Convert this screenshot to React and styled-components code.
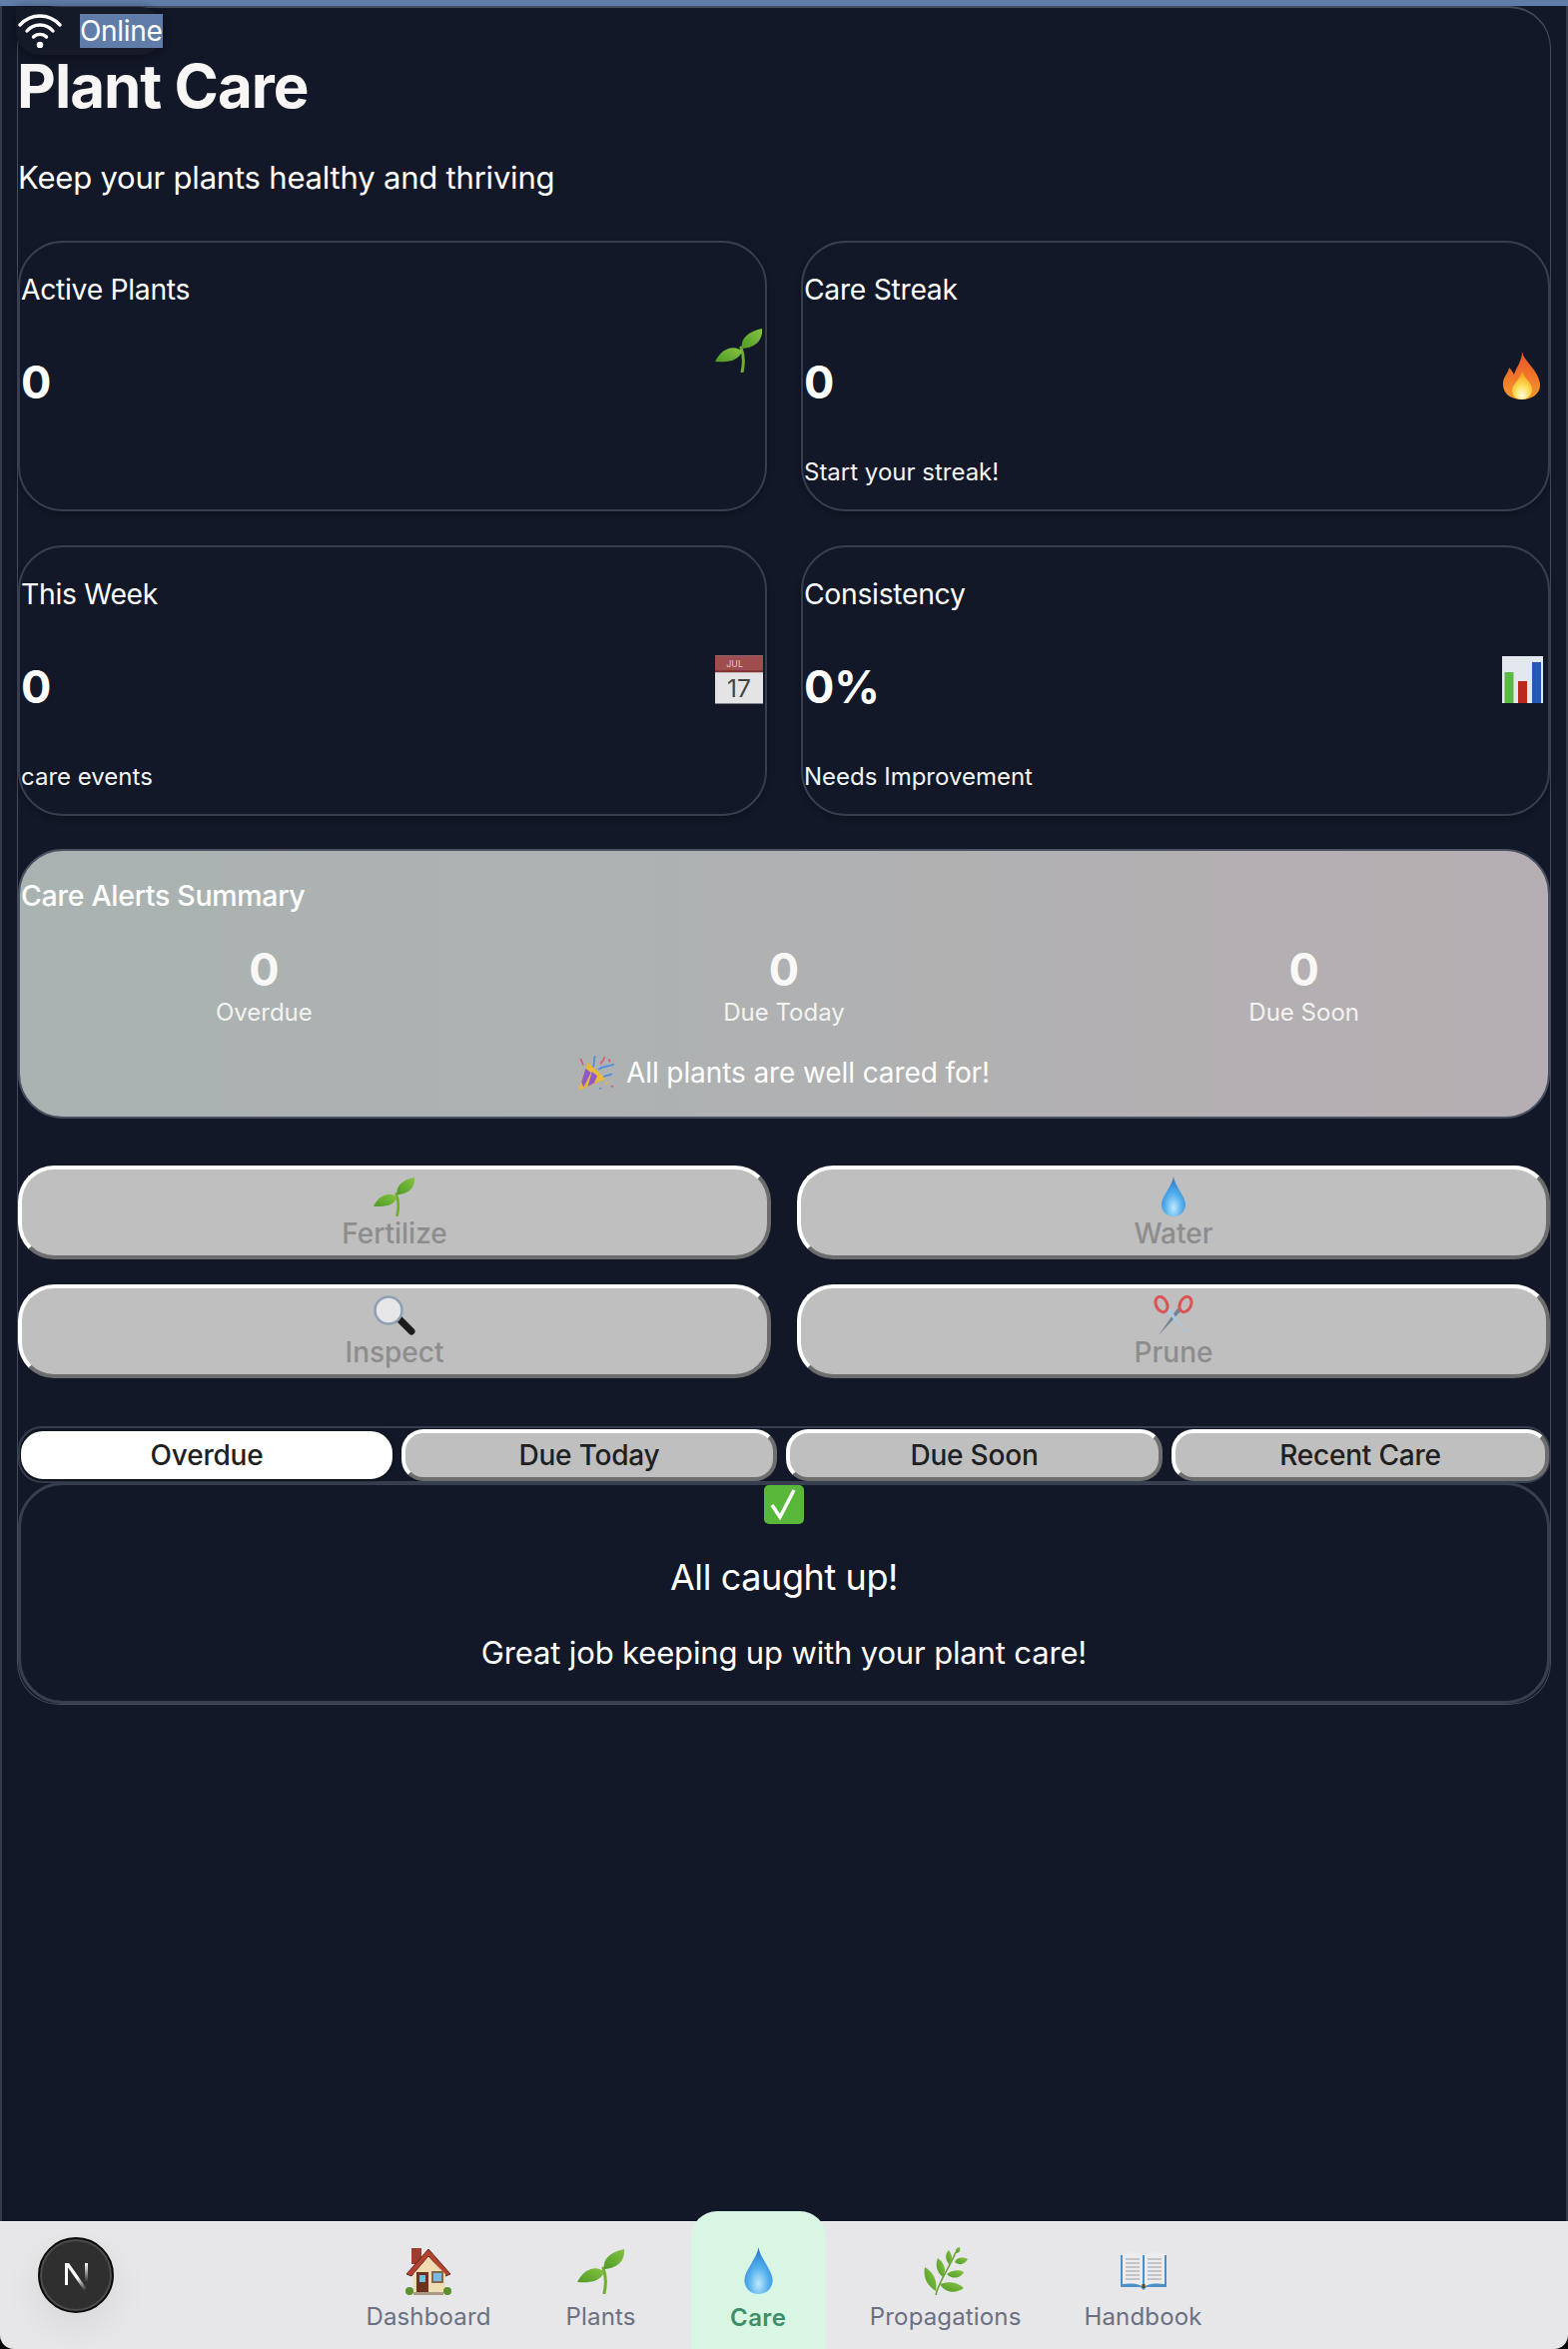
import styled, { createGlobalStyle } from 'styled-components'

const GlobalStyle = createGlobalStyle`
  html, body {
    margin: 0;
    padding: 0;
    background: #121827;
  }
  * {
    box-sizing: border-box;
  }
  body {
    font-family: Inter, "Noto Sans", "Liberation Sans", sans-serif;
  }
`

// emoji have no font here so they are drawn
const Seedling = ({ w = 48, h = 44 }) => (
  <svg width={w} height={h} viewBox="0 0 48 44" fill="none">
    <defs>
      <linearGradient id="leafG" x1="0" y1="1" x2="1" y2="0">
        <stop offset="0" stopColor="#4f9a26" />
        <stop offset="1" stopColor="#86c443" />
      </linearGradient>
    </defs>
    <path d="M27 44C29 35 29 27 26 19" stroke="#6fae2e" strokeWidth="3" strokeLinecap="round" />
    <path d="M27 20C25 10 33 3 47 0C48 10 42 19 27 20Z" fill="url(#leafG)" />
    <path d="M27 23C20 16 7 19 0 33C11 34 23 33 27 23Z" fill="url(#leafG)" />
  </svg>
)

const Fire = () => (
  <svg width="40" height="48" viewBox="0 0 40 48">
    <defs>
      <linearGradient id="fireG" x1="0" y1="0" x2="0" y2="1">
        <stop offset="0" stopColor="#e8502a" />
        <stop offset="1" stopColor="#f79a2a" />
      </linearGradient>
      <radialGradient id="fireIn" cx="0.5" cy="0.85" r="0.7">
        <stop offset="0" stopColor="#fffbe0" />
        <stop offset="0.5" stopColor="#ffe05a" />
        <stop offset="1" stopColor="#f9a825" />
      </radialGradient>
    </defs>
    <path d="M20 0C22 10 36 18 38 32C39 42 30 48 20 48C9 48 0 42 1 31C2 24 6 22 7 16C10 19 11 21 12 23C14 16 20 10 20 0Z" fill="url(#fireG)" />
    <path d="M20 20C22 27 31 31 30 39C29 45 24 48 20 48C15 48 10 45 10 39C10 32 18 29 20 20Z" fill="url(#fireIn)" />
  </svg>
)

const Calendar = () => (
  <svg width="49" height="49" viewBox="0 0 49 49">
    <rect width="49" height="49" fill="#e4e4e6" />
    <rect width="49" height="17" fill="#a04d4d" />
    <rect y="15" width="49" height="2" fill="#7e3535" />
    <text x="20" y="12" fontSize="9" fill="#e8c8c8" textAnchor="middle" fontFamily="Inter, sans-serif">JUL</text>
    <text x="24.5" y="42" fontSize="25" fill="#444" textAnchor="middle" fontFamily="Inter, sans-serif">17</text>
  </svg>
)

const BarChart = () => (
  <svg width="41" height="47" viewBox="0 0 41 47">
    <rect width="41" height="47" fill="#e2e8ee" />
    <rect x="2.5" y="16" width="9" height="31" fill="#5cb946" />
    <rect x="16" y="25" width="9" height="22" fill="#b92a1a" />
    <rect x="30" y="6" width="9" height="41" fill="#2459b8" />
  </svg>
)

const Party = () => (
  <svg width="37" height="37" viewBox="0 0 35 35" fill="none">
    <path d="M0 34L9 7L26 23Z" fill="#e8b93a" />
    <path d="M3 26L7 13L12 17L5 31Z" fill="#8d5ac8" />
    <path d="M9 30L13 16L18 20L15 27Z" fill="#8d5ac8" />
    <path d="M14 12C16 8 14 5 16 1M19 14C24 10 28 12 34 9M24 21C27 19 30 20 32 18" stroke="#4f8be0" strokeWidth="1.6" />
    <path d="M21 9C22 6 24 7 25 2M2 4C4 6 3 8 5 10M29 4L30 7" stroke="#d8557a" strokeWidth="1.6" />
    <circle cx="27" cy="27" r="1.3" fill="#e8b93a" />
    <circle cx="32" cy="30" r="1" fill="#d8557a" />
    <circle cx="21" cy="32" r="1" fill="#4f8be0" />
  </svg>
)

const Drop = ({ w = 24, h = 40 }) => (
  <svg width={w} height={h} viewBox="0 0 24 40">
    <defs>
      <radialGradient id="dropG" cx="0.5" cy="0.78" r="0.75">
        <stop offset="0" stopColor="#bfe8fb" />
        <stop offset="0.45" stopColor="#57b2ee" />
        <stop offset="1" stopColor="#2277cc" />
      </radialGradient>
    </defs>
    <path d="M12 0C13 9 24 20 24 28C24 35 19 40 12 40C5 40 0 35 0 28C0 20 11 9 12 0Z" fill="url(#dropG)" />
  </svg>
)

const Magnifier = () => (
  <svg width="42" height="40" viewBox="0 0 42 40" fill="none">
    <path d="M25 23L38 36" stroke="#1c1c1e" strokeWidth="7" strokeLinecap="round" />
    <circle cx="15" cy="15" r="13.5" fill="#e6e6e8" stroke="#8ea0b4" strokeWidth="2.5" />
  </svg>
)

const Scissors = () => (
  <svg width="40" height="40" viewBox="0 0 40 40" fill="none">
    <path d="M28 15L24 13L5 40Z" fill="#6e8496" />
    <path d="M12 15L16 13L35 40Z" fill="#a9c8e2" />
    <ellipse cx="8" cy="9" rx="5.5" ry="8" transform="rotate(-25 8 9)" stroke="#dd5353" strokeWidth="3" />
    <ellipse cx="32" cy="9" rx="5.5" ry="8" transform="rotate(25 32 9)" stroke="#dd5353" strokeWidth="3" />
  </svg>
)

const CheckBox = () => (
  <svg width="40" height="39" viewBox="0 0 40 39" fill="none">
    <rect width="40" height="39" rx="5" fill="#59b83a" />
    <path d="M8 20L16 32L30 5" stroke="#fff" strokeWidth="3.5" />
  </svg>
)

const House = () => (
  <svg width="46" height="47" viewBox="0 0 46 47">
    <rect x="6" y="0" width="10" height="16" fill="#9c3d2e" />
    <rect x="8" y="18" width="32" height="27" fill="#efdcb0" />
    <path d="M1 26L23 1L45 26L40 28L23 8L6 28Z" fill="#b8402f" stroke="#5a2a20" strokeWidth="1" />
    <path d="M8 26L23 9L40 26V30H8Z" fill="#efdcb0" />
    <rect x="11" y="24" width="12" height="20" fill="#6b3220" />
    <rect x="14" y="27" width="6" height="7" fill="#7cb8e4" />
    <rect x="26" y="23" width="12" height="12" fill="#7d6a50" />
    <rect x="28" y="25" width="8" height="8" fill="#7cb8e4" />
    <circle cx="4" cy="43" r="4" fill="#5c8f2e" />
    <circle cx="42" cy="43" r="4" fill="#5c8f2e" />
    <rect x="8" y="44" width="30" height="3" fill="#a89a86" />
  </svg>
)

const Herb = () => (
  <svg width="46" height="48" viewBox="0 0 46 48" fill="none">
    <path d="M13 48C16 34 26 22 33 5" stroke="#6d9f3a" strokeWidth="1.6" />
    <g fill="url(#leafG)">
      <path d="M13 44C4 38 0 30 2 20C10 25 15 33 13 44Z" />
      <path d="M17 37C32 32 40 40 41 41C33 47 22 46 17 37Z" />
      <path d="M20 30C14 25 12 18 15 11C22 16 24 24 20 30Z" />
      <path d="M24 27C28 23 37 22 41 25C38 31 30 33 24 27Z" />
      <path d="M27 18C22 13 22 7 26 3C30 8 30 14 27 18Z" />
      <path d="M32 15C33 11 39 9 45 12C42 17 37 19 32 15Z" />
      <path d="M33 6C32 2 35 0 37 0C38 3 37 6 33 6Z" />
    </g>
  </svg>
)

const Book = () => (
  <svg width="46" height="40" viewBox="0 0 46 40" fill="none">
    <path d="M0 4H46V36H26L23 39L20 36H0Z" fill="#4e8fc8" />
    <path d="M2 2C10 0 18 1 22 4V35C16 32 8 32 2 33Z" fill="#ececee" />
    <path d="M44 2C36 0 28 1 24 4V35C30 32 38 32 44 33Z" fill="#ececee" />
    <path d="M5 8H19M5 12H19M5 16H19M5 20H19M5 24H19M5 28H19M27 8H41M27 12H41M27 16H41M27 20H41M27 24H41M27 28H41" stroke="#9a9aa0" strokeWidth="1.2" />
    <rect x="21.5" y="33" width="3" height="4" fill="#5a4a20" />
  </svg>
)

const Wifi = () => (
  <svg width="44" height="34" viewBox="0 0 44 34" fill="none" stroke="#fff" strokeWidth="3.4" strokeLinecap="round">
    <path d="M2 11C13 -1 31 -1 42 11" />
    <path d="M9 17C16 9 28 9 35 17" />
    <path d="M15.5 23C19 19.5 25 19.5 28.5 23" />
    <circle cx="22" cy="31" r="1.6" fill="#fff" />
  </svg>
)

const NextMark = () => (
  <svg width="30" height="34" viewBox="0 0 30 34" fill="none">
    <defs>
      <linearGradient id="nDiag" x1="0" y1="0" x2="0.7" y2="1">
        <stop offset="0.55" stopColor="#fff" />
        <stop offset="1" stopColor="#fff" stopOpacity="0" />
      </linearGradient>
      <linearGradient id="nBar" x1="0" y1="0" x2="0" y2="1">
        <stop offset="0" stopColor="#fff" />
        <stop offset="1" stopColor="#fff" stopOpacity="0" />
      </linearGradient>
    </defs>
    <rect x="2" y="2" width="3" height="22" fill="#fff" />
    <path d="M2 2H6L27 32H23Z" fill="url(#nDiag)" />
    <rect x="22" y="2" width="3" height="19" fill="url(#nBar)" />
  </svg>
)

const Shell = styled.div`
  position: relative;
  height: 2352px;
  display: flex;
  flex-direction: column;
  background: #121827;
  overflow: hidden;
`

const TopStrip = styled.div`
  height: 6px;
  flex: none;
  background: #5f7da8;
`

const Body = styled.main`
  flex: 1;
  min-height: 0;
  padding: 0 15px;
  border-left: 2px solid #333a4a;
  border-right: 2px solid #333a4a;
`

const Frame = styled.div`
  border: 1px solid #444b5c;
  border-top-width: 2px;
  border-radius: 42px;
`

const OnlinePill = styled.div`
  position: absolute;
  top: 7px;
  left: 16px;
  width: 148px;
  height: 48px;
  display: flex;
  align-items: center;
  gap: 18px;
  padding-left: 2px;
  border-radius: 0 24px 24px 24px;
  background: #141a28;
  box-shadow: 0 2px 10px rgba(8, 10, 18, 0.6);
`

const OnlineLabel = styled.span`
  color: #fff;
  font-size: 28px;
  line-height: 34px;
  letter-spacing: -0.3px;
  background: #5f7da8;
`

const Title = styled.h1`
  margin: 48px 0 0 -1px;
  color: #f7f6f5;
  font-size: 60px;
  line-height: 60px;
  font-weight: 700;
  letter-spacing: -1px;
`

const Subtitle = styled.p`
  margin: 39px 0 41px;
  color: #fff;
  font-size: 31px;
  line-height: 45px;
  font-weight: 400;
  letter-spacing: -0.2px;
`

const StatGrid = styled.div`
  display: grid;
  grid-template-columns: 1fr 1fr;
  gap: 34px;
`

const StatCard = styled.div`
  display: flex;
  align-items: flex-start;
  height: 271px;
  padding: 20px 2px 0 1px;
  border: 2px solid #373e4f;
  border-radius: 45px;
  box-shadow: 0 3px 6px rgba(5, 8, 16, 0.3);
`

const StatRow = styled.div`
  flex: 1;
  display: flex;
  align-items: center;
  justify-content: space-between;
`

const StatIcon = styled.div`
  width: 48px;
  display: flex;
  justify-content: center;
`

const StatLabel = styled.div`
  margin-top: 7px;
  color: #fff;
  font-size: 28.3px;
  line-height: 40px;
  font-weight: 400;
  letter-spacing: -0.3px;
`

const StatValue = styled.div`
  margin-top: 39px;
  padding-bottom: 21px;
  color: #fff;
  font-size: 45px;
  line-height: 68px;
  font-weight: 700;
`

const StatNote = styled.div`
  margin-top: 20px;
  color: #f4f4f4;
  font-size: 24px;
  line-height: 30px;
  font-weight: 400;
`

const AlertPanel = styled.section`
  height: 270px;
  margin-top: 33px;
  padding: 25px 1px 0;
  border: 2px solid #495061;
  border-radius: 45px;
  background: linear-gradient(90deg, #a9b3b1, #b0b1b2 55%, #b6aeb2);
  color: #fff;
`

const AlertTitle = styled.h2`
  margin: 0;
  font-size: 28.5px;
  line-height: 40px;
  font-weight: 500;
  letter-spacing: -0.3px;
`

const AlertGrid = styled.div`
  display: grid;
  grid-template-columns: repeat(3, 1fr);
  gap: 34px;
  margin-top: 27px;
  text-align: center;
`

const AlertValue = styled.div`
  color: #faf8f6;
  font-size: 45px;
  line-height: 54px;
  font-weight: 700;
`

const AlertLabel = styled.div`
  margin-top: -2px;
  color: #f3f3f1;
  font-size: 24px;
  line-height: 36px;
  font-weight: 400;
`

const Celebrate = styled.div`
  display: flex;
  align-items: center;
  justify-content: center;
  gap: 11px;
  margin-top: 21px;
  font-size: 28px;
  line-height: 42px;
  letter-spacing: -0.1px;
`

const ActionGrid = styled.div`
  display: grid;
  grid-template-columns: 1fr 1fr;
  gap: 25px 26px;
  margin-top: 47px;
`

const ActionButton = styled.button`
  height: 94px;
  padding: 7px 0 0;
  display: flex;
  flex-direction: column;
  align-items: center;
  justify-content: flex-start;
  border-width: 4px;
  border-style: solid;
  border-color: #fff #6d6d6d #6d6d6d #fff;
  border-radius: 36px;
  background: #bfbfbf;
  color: #8d8d8d;
  font-family: inherit;
  font-size: 28px;
  line-height: 34px;
  font-weight: 500;
  svg {
    height: 40px;
    flex: none;
  }
`

const TabList = styled.div`
  display: grid;
  grid-template-columns: 372px 376px 377px 378px;
  gap: 9px;
  height: 57px;
  margin-top: 48px;
  padding: 0 1px;
  border: 2px solid #373e4f;
  border-radius: 24px;
  align-items: center;
`

const Tab = styled.button`
  height: 52px;
  padding: 0;
  border-width: 4px;
  border-style: solid;
  border-color: ${p => (p.$active ? '#fff' : '#fff #6d6d6d #6d6d6d #fff')};
  border-radius: 22px;
  background: ${p => (p.$active ? '#fff' : '#bfbfbf')};
  color: #202020;
  font-family: inherit;
  font-size: 28px;
  line-height: 40px;
  font-weight: 500;
  letter-spacing: -0.2px;
  ${p => p.$active && 'box-shadow: 0 1px 4px rgba(0, 0, 0, 0.5); height: 48px;'}
`

const EmptyCard = styled.section`
  height: 222px;
  margin-top: -1px;
  display: flex;
  flex-direction: column;
  align-items: center;
  border: 3px solid #373e4f;
  border-radius: 45px;
  color: #fff;
`

const EmptyTitle = styled.h3`
  margin: 26px 0 0;
  font-size: 36px;
  line-height: 54px;
  font-weight: 400;
  letter-spacing: -0.4px;
`

const EmptyText = styled.p`
  margin: 26px 0 0;
  font-size: 31px;
  line-height: 45px;
  font-weight: 400;
  letter-spacing: -0.15px;
`

const NavBase = styled.div`
  flex: none;
  background: #0a0a0a;
`

const Nav = styled.nav`
  position: relative;
  height: 128px;
  display: flex;
  justify-content: center;
  border-top: 1px solid #f2f2f3;
  border-radius: 0 0 14px 14px;
  background: #e7e7ea;
`

const NavItem = styled.div`
  display: flex;
  flex-direction: column;
  align-items: center;
  height: ${p => (p.$active ? '138px' : '127px')};
  margin: ${p => (p.$active ? '-11px 6px 0 18px' : '0')};
  padding: ${p => (p.$active ? '35px 40px 0 39px' : '25px 37.5px 0')};
  border-radius: 26px 26px 0 0;
  background: ${p => (p.$active ? '#d9f6e5' : 'transparent')};
  z-index: 1;
  &:last-child {
    margin-left: -12px;
  }
`

const NavIcon = styled.div`
  height: 48px;
  display: flex;
  align-items: center;
  justify-content: center;
`

const NavLabel = styled.span`
  margin-top: ${p => (p.$active ? '9px' : '7px')};
  color: ${p => (p.$active ? '#3c8f68' : '#6b7080')};
  font-size: 24px;
  line-height: 30px;
  font-weight: ${p => (p.$active ? 600 : 400)};
  letter-spacing: ${p => (p.$active ? '0.4px' : '0.15px')};
  white-space: nowrap;
`

const DevBadge = styled.div`
  position: absolute;
  left: 38px;
  top: 15px;
  width: 76px;
  height: 76px;
  display: flex;
  align-items: center;
  justify-content: center;
  padding: 5px 0 0 4px;
  border: 2px solid #0c0c0c;
  border-radius: 50%;
  background: #2f2f2f;
  box-shadow: inset 0 0 0 2px #4d4d4d, 0 14px 40px rgba(0, 0, 0, 0.07);
`

const stats = [
  { label: 'Active Plants', value: '0', icon: <Seedling /> },
  { label: 'Care Streak', value: '0', note: 'Start your streak!', icon: <Fire /> },
  { label: 'This Week', value: '0', note: 'care events', icon: <Calendar /> },
  { label: 'Consistency', value: '0%', note: 'Needs Improvement', icon: <BarChart /> },
]

const alerts = ['Overdue', 'Due Today', 'Due Soon']

const actions = [
  { label: 'Fertilize', icon: <Seedling w={42} h={38} /> },
  { label: 'Water', icon: <Drop /> },
  { label: 'Inspect', icon: <Magnifier /> },
  { label: 'Prune', icon: <Scissors /> },
]

const tabs = ['Overdue', 'Due Today', 'Due Soon', 'Recent Care']

const navItems = [
  { label: 'Dashboard', icon: <House /> },
  { label: 'Plants', icon: <Seedling w={48} h={46} /> },
  { label: 'Care', icon: <Drop w={29} h={47} />, active: true },
  { label: 'Propagations', icon: <Herb /> },
  { label: 'Handbook', icon: <Book /> },
]

const App = () => {
  return (
    <Shell>
      <GlobalStyle />
      <TopStrip />
      <Body>
        <Frame>
          <Title>Plant Care</Title>
          <Subtitle>Keep your plants healthy and thriving</Subtitle>
          <StatGrid>
            {stats.map((s) => (
              <StatCard key={s.label}>
                <StatRow>
                  <div>
                    <StatLabel>{s.label}</StatLabel>
                    <StatValue>{s.value}</StatValue>
                    {s.note && <StatNote>{s.note}</StatNote>}
                  </div>
                  <StatIcon>{s.icon}</StatIcon>
                </StatRow>
              </StatCard>
            ))}
          </StatGrid>
          <AlertPanel>
            <AlertTitle>Care Alerts Summary</AlertTitle>
            <AlertGrid>
              {alerts.map((a) => (
                <div key={a}>
                  <AlertValue>0</AlertValue>
                  <AlertLabel>{a}</AlertLabel>
                </div>
              ))}
            </AlertGrid>
            <Celebrate>
              <Party />
              All plants are well cared for!
            </Celebrate>
          </AlertPanel>
          <ActionGrid>
            {actions.map((a) => (
              <ActionButton key={a.label}>
                {a.icon}
                {a.label}
              </ActionButton>
            ))}
          </ActionGrid>
          <TabList>
            {tabs.map((t, i) => (
              <Tab key={t} $active={i === 0}>{t}</Tab>
            ))}
          </TabList>
          <EmptyCard>
            <CheckBox />
            <EmptyTitle>All caught up!</EmptyTitle>
            <EmptyText>Great job keeping up with your plant care!</EmptyText>
          </EmptyCard>
        </Frame>
      </Body>
      <OnlinePill>
        <Wifi />
        <OnlineLabel>Online</OnlineLabel>
      </OnlinePill>
      <NavBase>
        <Nav>
          <DevBadge>
            <NextMark />
          </DevBadge>
          {navItems.map((n) => (
            <NavItem key={n.label} $active={n.active}>
              <NavIcon>{n.icon}</NavIcon>
              <NavLabel $active={n.active}>{n.label}</NavLabel>
            </NavItem>
          ))}
        </Nav>
      </NavBase>
    </Shell>
  )
}

export default App
